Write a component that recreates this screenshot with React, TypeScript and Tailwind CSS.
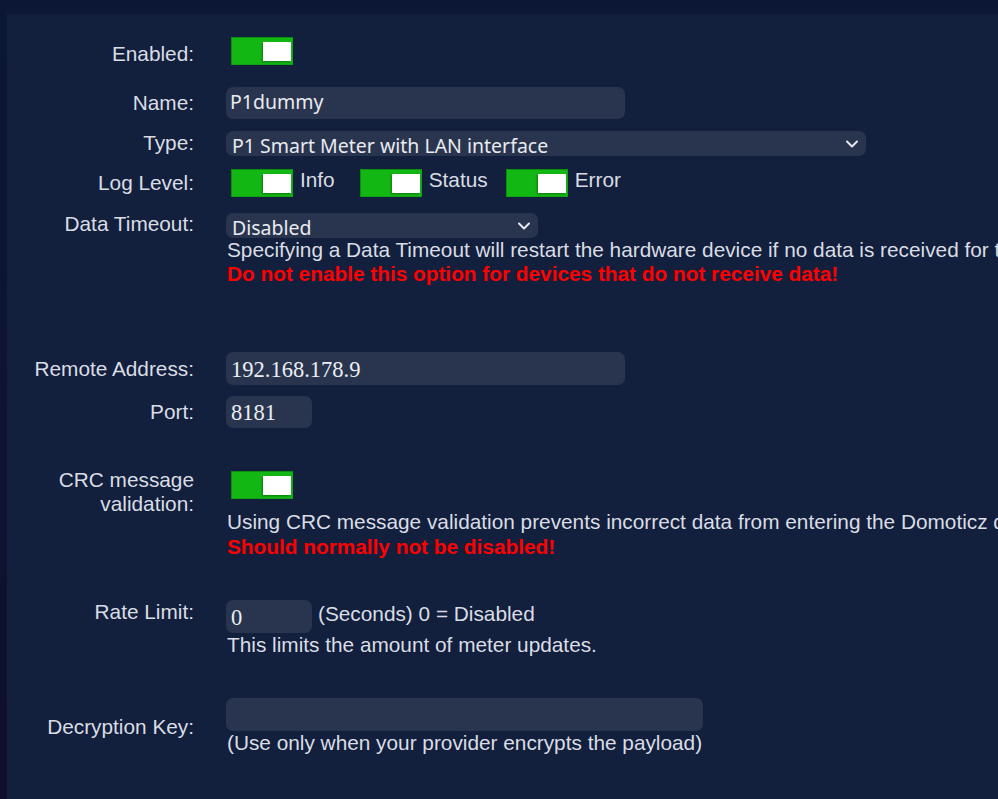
import React from "react";

const labelCls =
  "w-[187px] shrink-0 text-right text-[20.8px] leading-[24px] text-[#dadde4] [font-family:'Liberation_Sans',Arial,sans-serif]";
const textCls =
  "text-[20.8px] leading-[24px] text-[#dadde4] whitespace-nowrap [font-family:'Liberation_Sans',Arial,sans-serif]";
const redCls =
  "text-[20.8px] leading-[24px] text-[#ff0000] font-bold whitespace-nowrap [font-family:'Liberation_Sans',Arial,sans-serif]";

function Toggle({ className = "" }: { className?: string }) {
  return (
    <div
      className={
        "relative w-[62px] h-[28px] shrink-0 bg-[#13b713] shadow-[inset_1px_1px_0_#0a8f0a,inset_-1px_-1px_0_#10a510] " +
        className
      }
    >
      <div className="absolute right-[2px] top-[5px] w-[28px] h-[19px] bg-white shadow-[-1px_1px_2px_rgba(0,0,0,0.35)]" />
    </div>
  );
}

function Chevron() {
  return (
    <svg width="12" height="8" viewBox="0 0 12 8" className="shrink-0">
      <polyline
        points="1,1.5 6,6.5 11,1.5"
        fill="none"
        stroke="#e6e8ec"
        strokeWidth="2"
        strokeLinecap="round"
        strokeLinejoin="round"
      />
    </svg>
  );
}

export default function App() {
  return (
    <div className="w-[998px] h-[799px] overflow-hidden bg-gradient-to-b from-[#0b1735] to-[#100f2d] pl-[7px] pt-[14px]">
      <div className="h-full w-full bg-[#121f3d] pt-[23px] flex flex-col">
        {/* Enabled */}
        <div className="flex">
          <div className={labelCls + " pt-[5px]"}>Enabled:</div>
          <div className="ml-[32px] flex">
            <Toggle className="ml-[5px]" />
          </div>
        </div>

        {/* Name */}
        <div className="flex mt-[21px]">
          <div className={labelCls + " pt-[4px]"}>Name:</div>
          <div className="ml-[32px] w-[399px] h-[32px] rounded-[7px] bg-[#29354f] pl-[4px] pt-[3px] text-[19.5px] leading-[24px] text-[#e9ebef] [font-family:'Noto_Sans',sans-serif]">
            P1dummy
          </div>
        </div>

        {/* Type */}
        <div className="flex mt-[12px]">
          <div className={labelCls}>Type:</div>
          <div className="ml-[32px] w-[640px] h-[25px] rounded-[7px] bg-[#29354f] pl-[6px] pr-[8px] flex items-center justify-between overflow-visible">
            <span className="text-[19.5px] leading-[24px] mt-[4px] text-[#e9ebef] whitespace-nowrap [font-family:'Noto_Sans',sans-serif]">
              P1 Smart Meter with LAN interface
            </span>
            <Chevron />
          </div>
        </div>

        {/* Log Level */}
        <div className="flex mt-[13px]">
          <div className={labelCls + " pt-[2px]"}>Log Level:</div>
          <div className="ml-[32px] flex items-start">
            <Toggle className="ml-[5px]" />
            <span className={textCls + " ml-[7px] -mt-[1px]"}>Info</span>
            <Toggle className="ml-[25px]" />
            <span className={textCls + " ml-[7px] -mt-[1px]"}>Status</span>
            <Toggle className="ml-[18px]" />
            <span className={textCls + " ml-[7px] -mt-[1px]"}>Error</span>
          </div>
        </div>

        {/* Data Timeout */}
        <div className="flex mt-[16px]">
          <div className={labelCls + " -mt-[1px]"}>Data Timeout:</div>
          <div className="ml-[32px] flex flex-col">
            <div className="w-[312px] h-[25px] rounded-[7px] bg-[#29354f] pl-[6px] pr-[8px] flex items-center justify-between">
              <span className="text-[19.5px] leading-[24px] mt-[4px] text-[#e9ebef] whitespace-nowrap [font-family:'Noto_Sans',sans-serif]">
                Disabled
              </span>
              <Chevron />
            </div>
            <div className={textCls + " ml-[1px]"}>
              Specifying a Data Timeout will restart the hardware device if no data is received for the specified period.
            </div>
            <div className={redCls + " ml-[1px]"}>
              Do not enable this option for devices that do not receive data!
            </div>
          </div>
        </div>

        {/* Remote Address */}
        <div className="flex mt-[66px]">
          <div className={labelCls + " pt-[5px]"}>Remote Address:</div>
          <div className="ml-[32px] w-[399px] h-[33px] rounded-[7px] bg-[#29354f] pl-[5px] pt-[5px] text-[22.5px] leading-[26px] text-[#eceef2] [font-family:'Liberation_Serif',serif]">
            192.168.178.9
          </div>
        </div>

        {/* Port */}
        <div className="flex mt-[11px]">
          <div className={labelCls + " pt-[4px]"}>Port:</div>
          <div className="ml-[32px] w-[86px] h-[32px] rounded-[7px] bg-[#29354f] pl-[5px] pt-[4px] text-[22.5px] leading-[26px] text-[#eceef2] [font-family:'Liberation_Serif',serif]">
            8181
          </div>
        </div>

        {/* CRC */}
        <div className="flex mt-[40px]">
          <div className={labelCls}>
            CRC message
            <br />
            validation:
          </div>
          <div className="ml-[32px] flex flex-col pt-[3px]">
            <Toggle className="ml-[5px]" />
            <div className={textCls + " ml-[1px] mt-[10px] leading-[25px]"}>
              Using CRC message validation prevents incorrect data from entering the Domoticz database.
            </div>
            <div className={redCls + " ml-[1px] leading-[25px]"}>Should normally not be disabled!</div>
          </div>
        </div>

        {/* Rate Limit */}
        <div className="flex mt-[41px]">
          <div className={labelCls}>Rate Limit:</div>
          <div className="ml-[32px] flex flex-col">
            <div className="flex items-start">
              <div className="w-[86px] h-[33px] rounded-[7px] bg-[#29354f] pl-[5px] pt-[5px] text-[22.5px] leading-[26px] text-[#eceef2] [font-family:'Liberation_Serif',serif]">
                0
              </div>
              <span className={textCls + " ml-[6px] mt-[2px]"}>(Seconds) 0 = Disabled</span>
            </div>
            <div className={textCls + " ml-[1px]"}>This limits the amount of meter updates.</div>
          </div>
        </div>

        {/* Decryption Key */}
        <div className="flex mt-[41px]">
          <div className={labelCls + " pt-[17px]"}>Decryption Key:</div>
          <div className="ml-[32px] flex flex-col">
            <div className="w-[477px] h-[33px] rounded-[7px] bg-[#29354f]" />
            <div className={textCls + " ml-[1px]"}>(Use only when your provider encrypts the payload)</div>
          </div>
        </div>
      </div>
    </div>
  );
}
